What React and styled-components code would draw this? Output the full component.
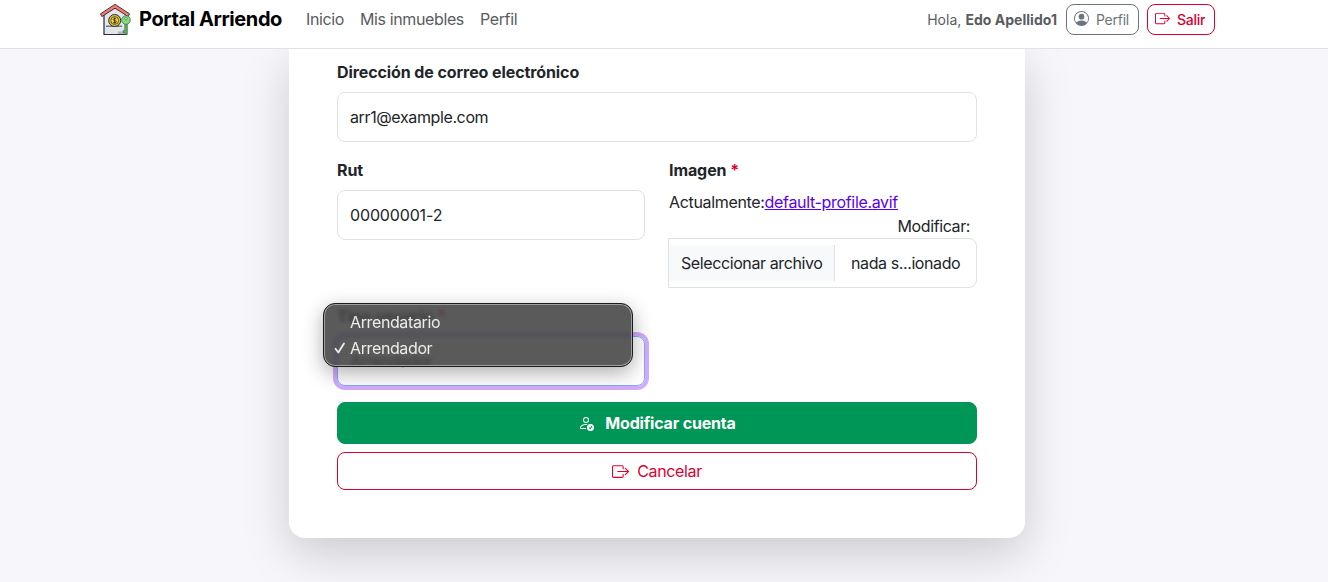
import React from "react";
import styled, { createGlobalStyle } from "styled-components";
import { BsPersonCircle, BsBoxArrowRight, BsPersonCheck } from "react-icons/bs";

const GlobalStyle = createGlobalStyle`
  * { box-sizing: border-box; }
  body {
    margin: 0;
    background: #f6f6fb;
    color: #212529;
    font: 400 16px/24px Inter, "Liberation Sans", sans-serif;
    letter-spacing: -0.38px;
  }
`;

const Page = styled.div`
  height: 582px;
  overflow: hidden;
`;

const Header = styled.header`
  position: relative;
  z-index: 2;
  height: 49px;
  display: flex;
  align-items: center;
  padding: 0 113px 9px 99px;
  background: #fff;
  border-bottom: 1px solid #dee2e6;
`;

const Brand = styled.a`
  display: flex;
  align-items: center;
  gap: 8px;
  color: #000;
  font-size: 20px;
  font-weight: 700;
  letter-spacing: -0.4px;
  white-space: nowrap;
`;

const BrandName = styled.span`
  width: 143px;
  margin-bottom: 2px;
`;

const Nav = styled.nav`
  display: flex;
  gap: 16px;
  margin: 0 0 2px 24px;
  color: #595c5f;
`;

const NavLink = styled.a`
  width: ${(p) => p.$width}px;
  white-space: nowrap;
`;

const Account = styled.div`
  display: flex;
  align-items: center;
  margin-left: auto;
  gap: 8px;
  font-size: 14px;
  color: #595c5f;
  letter-spacing: -0.25px;
  white-space: nowrap;
`;

const Greeting = styled.span`
  margin-right: 1px;
  letter-spacing: 0.03px;
`;

const SmallButton = styled.button`
  display: flex;
  align-items: center;
  height: 31px;
  width: ${(p) => p.$width}px;
  padding: 0 7px;
  gap: 7px;
  border: 1px solid ${(p) => p.$color};
  border-radius: 8px;
  background: transparent;
  color: ${(p) => p.$color};
  font: inherit;
  font-weight: ${(p) => p.$weight || 400};
  letter-spacing: inherit;

  svg {
    margin-bottom: 2px;
  }
`;

const Card = styled.main`
  position: relative;
  width: 736px;
  height: 489px;
  margin-left: 289px;
  padding: 11px 48px 48px;
  background: #fff;
  border-radius: 0 0 16px 16px;
  box-shadow: 0 16px 48px rgba(0, 0, 0, 0.176);
`;

const Label = styled.label`
  display: block;
  height: 24px;
  margin-bottom: 8px;
  font-weight: 700;
  letter-spacing: -0.09px;
`;

const Required = styled.span`
  color: #dc0032;
`;

const Input = styled.input`
  display: block;
  width: 100%;
  height: 50px;
  padding: 0 12px;
  border: 1px solid #dee2e6;
  border-radius: 8px;
  background: #fff;
  color: #212529;
  font: inherit;
  letter-spacing: ${(p) => (p.$numeric ? "-0.15px" : "inherit")};
`;

const Row = styled.div`
  display: grid;
  grid-template-columns: 308px 308px;
  column-gap: 24px;
  margin-top: 16px;
`;

const FileInfo = styled.div`
  display: flex;
  flex-wrap: wrap;
  width: 309px;
  letter-spacing: -0.33px;
`;

const FileLink = styled.a`
  color: #5a00f0;
  text-decoration: underline;
`;

const ChangeLabel = styled.span`
  width: 301px;
  text-align: right;
  letter-spacing: -0.4px;
`;

const FileInput = styled.div`
  display: flex;
  align-items: center;
  width: 309px;
  height: 50px;
  margin-left: -1px;
  border: 1px solid #dee2e6;
  border-radius: 0 8px 8px 0;
  letter-spacing: -0.4px;
  white-space: nowrap;
`;

const FileButton = styled.span`
  width: 166px;
  height: 36px;
  padding: 6px 12px;
  margin-right: 16px;
  background: #f8f9fa;
  border-right: 1px solid #dee2e6;
`;

const TypeField = styled.div`
  position: relative;
  width: 308px;
  margin-top: 16px;
`;

const Select = styled.div`
  height: 50px;
  padding: 12px;
  border: 1px solid #86a8fe;
  border-radius: 8px;
  box-shadow: 0 0 0 4px #d1acfc;
`;

const Menu = styled.ul`
  position: absolute;
  z-index: 1;
  top: -1px;
  left: -14px;
  width: 310px;
  height: 64px;
  margin: 0;
  padding: 5px 0;
  list-style: none;
  border: 1px solid #1b1b1b;
  border-radius: 12px;
  background: rgba(66, 66, 66, 0.87);
  backdrop-filter: blur(2px);
  box-shadow: inset 0 0 0 1px #a09fa5, 0 6px 20px rgba(0, 0, 0, 0.32);
`;

const Option = styled.li`
  display: flex;
  align-items: center;
  height: 26px;
  padding-left: 10px;
  color: #ececec;
`;

const Tick = styled.span`
  width: 16px;
  display: flex;
`;

const Action = styled.button`
  display: flex;
  align-items: center;
  justify-content: center;
  width: 100%;
  height: ${(p) => (p.$primary ? 42 : 38)}px;
  margin-top: ${(p) => (p.$primary ? 16 : 8)}px;
  padding: 0;
  gap: ${(p) => (p.$primary ? 11 : 8)}px;
  border: 1px solid ${(p) => (p.$primary ? "#009658" : "#dc0032")};
  border-radius: 8px;
  background: ${(p) => (p.$primary ? "#009658" : "#fff")};
  color: ${(p) => (p.$primary ? "#fff" : "#dc0032")};
  font: inherit;
  font-weight: ${(p) => (p.$primary ? 700 : 400)};
  letter-spacing: ${(p) => (p.$primary ? "-0.18px" : "-0.35px")};
`;

function HouseLogo() {
  return (
    <svg width="32" height="32" viewBox="0 0 32 32">
      <path d="M5 10.500 16 3l11.500 7.500V30.500H5z" fill="#e3e4ec" stroke="#262a38" strokeWidth="1.200" />
      <path d="M7 21.500h16V23H7z" fill="#777b88" />
      <path d="M19 27.500h6V30h-6z" fill="#b2b4bf" />
      <path d="M1.500 9.800 16 .3l14.500 9.500-1.300 2.800L16 4.200 2.800 12.600z" fill="#f97a6c" stroke="#262a38" strokeWidth=".9" strokeLinejoin="round" />
      <circle cx="15.700" cy="16.500" r="6" fill="#e5c52c" stroke="#262a38" />
      <circle cx="15.700" cy="16.500" r="3.900" fill="#f6dc3e" stroke="#5a4a15" strokeWidth=".9" />
      <path d="M17.200 15c-.7-.8-3-.8-3 .5 0 1.500 3.100.7 3.100 2.300 0 1.300-2.600 1.300-3.300.3M15.700 13.500v6" fill="none" stroke="#262a38" strokeWidth=".9" />
      <path d="M25.800 19h2.500v11.300h-2.500v-1.700h-1.700v-2h1.700z" fill="#5fb45c" stroke="#315f3b" strokeWidth=".6" />
      <circle cx="27" cy="16" r="4.300" fill="#82e07c" stroke="#3a7a45" strokeWidth=".8" />
      <circle cx="27" cy="14.800" r="1.200" fill="#fff" stroke="#315f3b" strokeWidth=".7" />
    </svg>
  );
}

export default function App() {
  return (
    <Page>
      <GlobalStyle />
      <Header>
        <Brand><HouseLogo /><BrandName>Portal Arriendo</BrandName></Brand>
        <Nav>
          <NavLink $width={38}>Inicio</NavLink>
          <NavLink $width={104}>Mis inmuebles</NavLink>
          <NavLink $width={38}>Perfil</NavLink>
        </Nav>
        <Account>
          <Greeting>Hola, <b>Edo Apellido1</b></Greeting>
          <SmallButton $color="#6c757d" $width={73}><BsPersonCircle size={15} />Perfil</SmallButton>
          <SmallButton $color="#dc0032" $width={68} $weight={500}><BsBoxArrowRight size={15} />Salir</SmallButton>
        </Account>
      </Header>
      <Card>
        <Label>Dirección de correo electrónico</Label>
        <Input defaultValue="arr1@example.com" />
        <Row>
          <div>
            <Label>Rut</Label>
            <Input $numeric defaultValue="00000001-2" />
          </div>
          <div>
            <Label>Imagen <Required>*</Required></Label>
            <FileInfo>
              Actualmente:<FileLink>default-profile.avif</FileLink>
              <ChangeLabel>Modificar:</ChangeLabel>
            </FileInfo>
            <FileInput><FileButton>Seleccionar archivo</FileButton>nada s...ionado</FileInput>
          </div>
        </Row>
        <TypeField>
          <Label>Tipo usuario <Required>*</Required></Label>
          <Select>Arrendador</Select>
          <Menu>
            <Option><Tick />Arrendatario</Option>
            <Option>
              <Tick>
                <svg width="12" height="12" viewBox="0 0 12 12" fill="none" stroke="currentColor" strokeWidth="1.800" strokeLinecap="round" strokeLinejoin="round">
                  <path d="M1.500 6.800 4.300 10.500 10 1.500" />
                </svg>
              </Tick>
              Arrendador
            </Option>
          </Menu>
        </TypeField>
        <Action $primary><BsPersonCheck size={16} />Modificar cuenta</Action>
        <Action><BsBoxArrowRight size={17} />Cancelar</Action>
      </Card>
    </Page>
  );
}
